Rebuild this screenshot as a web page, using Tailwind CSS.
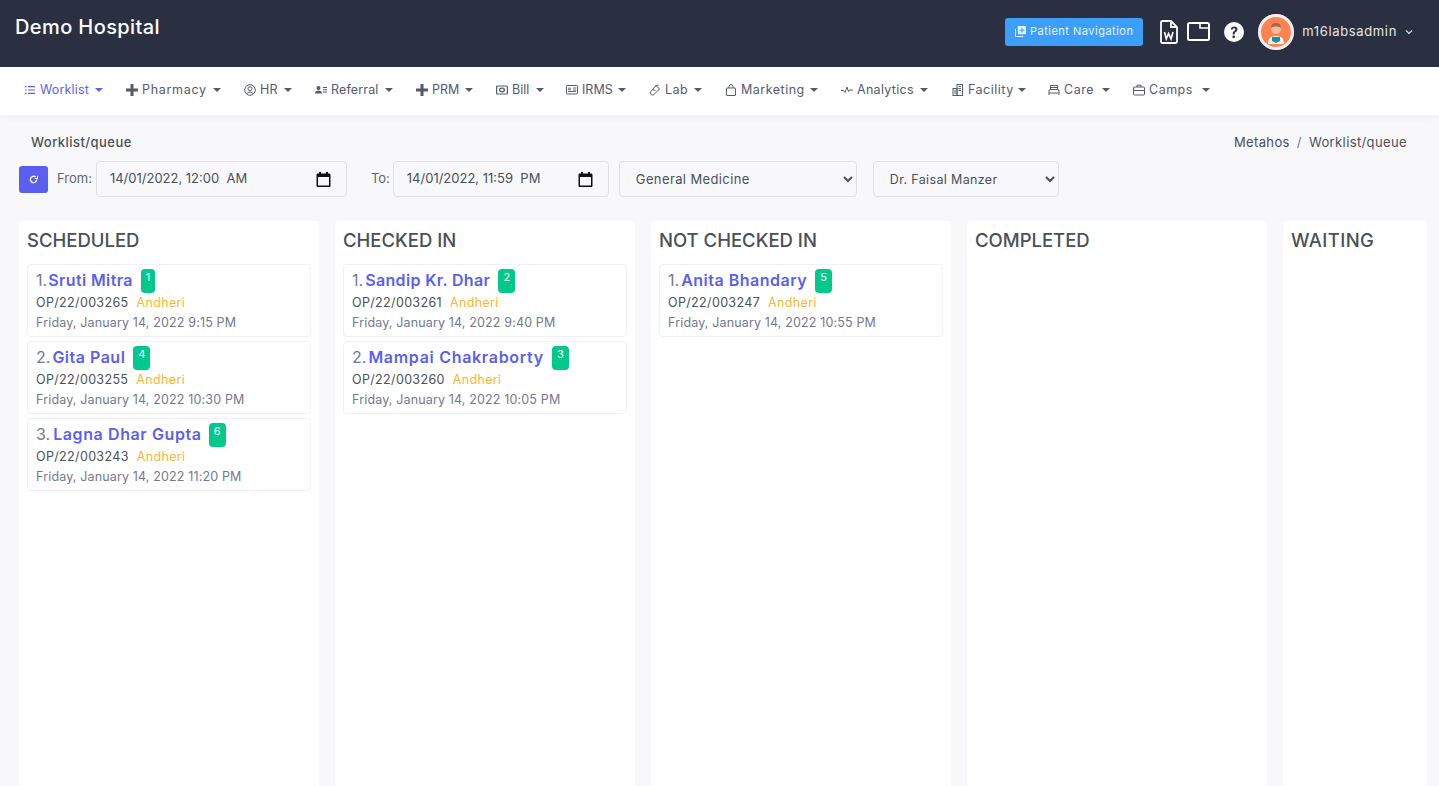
<!DOCTYPE html>
<html lang="en">
<head>
<meta charset="utf-8">
<title>Worklist</title>
<script src="https://cdn.jsdelivr.net/npm/@tailwindcss/browser@4"></script>
</head>
<body class="h-[786px] overflow-hidden bg-[#f8f8fb] font-['Inter','Noto_Sans',sans-serif] text-[13px] text-[#495057]">
<header class="flex h-[67px] items-center justify-between bg-[#2a3042] pb-[4px] pl-[15px] pr-[26px]">
  <div class="-mt-[9px] text-[20px] font-medium tracking-[.4px] text-white">Demo Hospital</div>
  <div class="flex items-center">
    <button class="flex h-[28px] w-[138px] items-center justify-center gap-[4px] rounded-[3px] bg-[#3b9ffa] text-[11px] tracking-[.5px] text-[#e6f3ff]">
      <svg class="size-[11px]" viewBox="0 0 12 12" fill="#e6f3ff"><path d="M4 0h7a1 1 0 0 1 1 1v7a1 1 0 0 1-1 1H4a1 1 0 0 1-1-1V1a1 1 0 0 1 1-1Zm3 2v2H5v1.200h2v2h1.200v-2h2V4h-2V2ZM1 3v7.500c0 .300.200.500.500.500H9v1H1.200A1.200 1.200 0 0 1 0 10.800V3Z"/></svg>
      Patient Navigation
    </button>
    <svg class="ml-[17px] h-[24px] w-[18px]" viewBox="0 0 18 24" fill="none" stroke="#fff" stroke-width="1.800"><path d="M2.500 1h8.500l6 6v14.500a1.500 1.500 0 0 1-1.500 1.500h-13A1.500 1.500 0 0 1 1 21.500v-19A1.500 1.500 0 0 1 2.500 1Z"/><path d="M11 1v6h6"/><path d="m4.500 12 1.800 7 2.200-5.500L11 19l2-7" stroke-width="1.600"/></svg>
    <svg class="ml-[9px] h-[19px] w-[23px]" viewBox="0 0 23 19" fill="none" stroke="#fff" stroke-width="2"><rect x="1" y="1" width="21" height="17" rx="1.500"/><path d="M13 1v5h9" stroke-width="1.600"/></svg>
    <svg class="ml-[14px] size-[20px]" viewBox="0 0 20 20"><circle cx="10" cy="10" r="10" fill="#fff"/><path d="M6.800 7.600C6.900 5.600 8.300 4.400 10.200 4.400c2 0 3.300 1.200 3.300 2.900 0 1.300-.700 2-1.700 2.700-.900.600-1.100 1-1.100 1.900v.500H8.700v-.700c0-1.200.400-1.900 1.400-2.600.800-.600 1.200-1 1.200-1.600 0-.700-.500-1.200-1.200-1.200-.800 0-1.300.500-1.400 1.300Z" fill="#2a3042"/><circle cx="9.700" cy="14.800" r="1.400" fill="#2a3042"/></svg>
    <div class="ml-[14px] flex size-[36px] items-center justify-center overflow-hidden rounded-full bg-[#ff8250] ring-[3px] ring-inset ring-[#f0f0f0]">
      <svg class="size-[24px]" viewBox="0 0 24 24"><path d="M4 24c0-6 3-8 8-8s8 2 8 8Z" fill="#eef3f5"/><circle cx="12" cy="9" r="5" fill="#f3bd98"/><path d="M7 8c0-4 2-5 5-5s5 1 5 5c-2-2-8-2-10 0Z" fill="#a4694a"/><path d="M8 17h8v4l-4 2-4-2Z" fill="#1d8f97"/></svg>
    </div>
    <span class="ml-[8px] text-[13px] tracking-[.65px] text-[#e3e5ea]">m16labsadmin</span>
    <svg class="ml-[8px] size-[8px]" viewBox="0 0 8 8" fill="none" stroke="#e3e5ea" stroke-width="1.100"><path d="m1 2.500 3 3 3-3"/></svg>
  </div>
</header>

<nav class="flex h-[48px] items-center bg-white pb-[2px] pl-[25px] text-[12.500px] tracking-[.5px] text-[#545a6d] shadow-[0_2px_8px_rgba(18,38,63,0.04)]">
  <a class="flex w-[101px] items-center tracking-[.15px] text-[#5b63ee]"><svg class="mr-[5px] size-[10px]" viewBox="0 0 10 10" fill="#5b63ee"><path d="M0 1h1.500v1.200H0Zm3 0h7v1.200H3ZM0 4.400h1.500v1.200H0Zm3 0h7v1.200H3ZM0 7.800h1.500V9H0Zm3 0h7V9H3Z"/></svg>Worklist<i class="ml-auto mr-[23px] size-0 border-x-[4px] border-t-[4px] border-x-transparent border-t-current"></i></a>
  <a class="flex w-[118px] items-center tracking-[.7px]"><svg class="mr-[4px] size-[12px]" viewBox="0 0 12 12" fill="#545a6d"><path d="M4.500 0h3v4.500H12v3H7.500V12h-3V7.500H0v-3h4.500Z"/></svg>Pharmacy<i class="ml-auto mr-[23px] size-0 border-x-[4px] border-t-[4px] border-x-transparent border-t-current"></i></a>
  <a class="flex w-[71px] items-center tracking-[.3px]"><svg class="mr-[4px] size-[12px]" viewBox="0 0 12 12" fill="none" stroke="#545a6d"><circle cx="6" cy="6" r="5.300"/><circle cx="6" cy="4.800" r="2"/><path d="M2.800 9.800c1-2.200 5.400-2.200 6.400 0"/></svg>HR<i class="ml-auto mr-[23px] size-0 border-x-[4px] border-t-[4px] border-x-transparent border-t-current"></i></a>
  <a class="flex w-[101px] items-center tracking-[.15px]"><svg class="mr-[4px] size-[12px]" viewBox="0 0 12 12" fill="#545a6d"><circle cx="3.500" cy="4" r="2"/><path d="M0 9.500c0-2 1.500-3 3.500-3s3.500 1 3.500 3Z"/><path d="M8 3h4v1H8Zm0 2.200h4v1H8Zm0 2.200h4v1H8Z"/></svg>Referral<i class="ml-auto mr-[23px] size-0 border-x-[4px] border-t-[4px] border-x-transparent border-t-current"></i></a>
  <a class="flex w-[80px] items-center tracking-[0px]"><svg class="mr-[4px] size-[12px]" viewBox="0 0 12 12" fill="#545a6d"><path d="M4.500 0h3v4.500H12v3H7.500V12h-3V7.500H0v-3h4.500Z"/></svg>PRM<i class="ml-auto mr-[23px] size-0 border-x-[4px] border-t-[4px] border-x-transparent border-t-current"></i></a>
  <a class="flex w-[70px] items-center tracking-[0px]"><svg class="mr-[4px] size-[12px]" viewBox="0 0 12 12" fill="none" stroke="#545a6d"><rect x=".600" y="2" width="10.800" height="8" rx="1" stroke-width="1.200"/><ellipse cx="6" cy="6" rx="2.400" ry="1.800" stroke-width="1.300"/></svg>Bill<i class="ml-auto mr-[22px] size-0 border-x-[4px] border-t-[4px] border-x-transparent border-t-current"></i></a>
  <a class="flex w-[83px] items-center tracking-[0px]"><svg class="mr-[4px] size-[12px]" viewBox="0 0 12 12" fill="none" stroke="#545a6d"><rect x=".500" y="1.500" width="11" height="8.500" rx=".800"/><path d="M2 4.200h3M7 4h3M7 6h3M2 7.500h8M2 5.800h3" stroke-width=".900"/></svg>IRMS<i class="ml-auto mr-[23px] size-0 border-x-[4px] border-t-[4px] border-x-transparent border-t-current"></i></a>
  <a class="flex w-[76px] items-center"><svg class="mr-[4px] size-[12px]" viewBox="0 0 12 12" fill="none" stroke="#545a6d"><path d="m7 1.500 3.500 3.500-5.500 5.500a2 2 0 0 1-3.200-.500 2 2 0 0 1-.100-2.300ZM6 2.500 9.500 .9M3.500 5.500l3 1"/></svg>Lab<i class="ml-auto mr-[23px] size-0 border-x-[4px] border-t-[4px] border-x-transparent border-t-current"></i></a>
  <a class="flex w-[116px] items-center"><svg class="mr-[4px] size-[12px]" viewBox="0 0 12 12" fill="none" stroke="#545a6d"><rect x="1.500" y="4" width="9" height="7.500" rx=".500"/><path d="M4 4V2.500a2 2 0 0 1 4 0V4"/></svg>Marketing<i class="ml-auto mr-[23px] size-0 border-x-[4px] border-t-[4px] border-x-transparent border-t-current"></i></a>
  <a class="flex w-[111px] items-center tracking-[.3px]"><svg class="mr-[4px] h-[12px] w-[12px]" viewBox="0 0 12 12" fill="none" stroke="#545a6d"><path d="M0 6.500h2.500L4 8.500 6 3l1.500 4.500L8.500 6H12"/></svg>Analytics<i class="ml-auto mr-[24px] size-0 border-x-[4px] border-t-[4px] border-x-transparent border-t-current"></i></a>
  <a class="flex w-[96px] items-center"><svg class="mr-[4px] size-[12px]" viewBox="0 0 12 12" fill="none" stroke="#545a6d"><rect x="5" y=".500" width="5.500" height="11"/><rect x="1" y="4.500" width="4" height="7"/><path d="M6.500 2.500h2.500M6.500 4.500h2.500M6.500 6.500h2.500M2 7h2M2 9h2"/></svg>Facility<i class="ml-auto mr-[22px] size-0 border-x-[4px] border-t-[4px] border-x-transparent border-t-current"></i></a>
  <a class="flex w-[85px] items-center"><svg class="mr-[4px] size-[12px]" viewBox="0 0 12 12" fill="none" stroke="#545a6d"><path d="M2.500 5.500V1.500h7v4M1 11V7a1.500 1.500 0 0 1 1.500-1.500h7A1.500 1.500 0 0 1 11 7v4M1 9h10M2.500 3.500h7"/></svg>Care<i class="ml-auto mr-[23px] size-0 border-x-[4px] border-t-[4px] border-x-transparent border-t-current"></i></a>
  <a class="flex w-[100px] items-center"><svg class="mr-[4px] size-[12px]" viewBox="0 0 12 12" fill="none" stroke="#545a6d"><rect x=".500" y="3" width="11" height="8" rx="1"/><path d="M4 3V1.200h4V3M.500 6.500h11M5 6.500h2"/></svg>Camps<i class="ml-auto mr-[23px] size-0 border-x-[4px] border-t-[4px] border-x-transparent border-t-current"></i></a>
</nav>

<main class="pl-[19px] pr-[12px]">
  <div class="flex items-center justify-between pl-[12px] pr-[20px] pt-[18px] text-[13px] leading-[19px]">
    <span class="font-medium tracking-[.45px]">Worklist/queue</span>
    <span class="flex gap-[7px] tracking-[.38px]"><span>Metahos</span><span class="text-[#74788d]">/</span><span>Worklist/queue</span></span>
  </div>
  <div class="mt-[9px] flex h-[36px] items-center">
    <button class="flex h-[27px] w-[29px] items-center justify-center rounded-[3px] bg-[#5b5ff0]"><svg class="size-[9px]" viewBox="0 0 10 10" fill="none" stroke="#fff" stroke-width="1.500"><path d="M8.500 5A3.500 3.500 0 1 1 7.300 2.300"/><path d="M9.500.8v3h-3" stroke-width="1.200"/></svg></button>
    <span class="ml-[9px] text-[#5f6473]">From:</span>
    <div class="ml-[4px] flex h-[36px] w-[251px] items-center justify-between rounded-[4px] border border-[#dfe1e6] bg-[#f8f8fb] pl-[13px] pr-[15px] text-[13px]">14/01/2022, 12:00&nbsp; AM<svg class="size-[15px]" viewBox="0 0 15 15"><path fill="#111" fill-rule="evenodd" d="M3 0h2v1.500h5V0h2v1.500h1.200c.800 0 1.300.600 1.300 1.300v10.900c0 .800-.500 1.300-1.300 1.300H1.800c-.800 0-1.300-.500-1.300-1.300V2.800c0-.700.500-1.300 1.300-1.300H3Zm-1 5v8.500h11V5Z"/></svg></div>
    <span class="ml-[24px] text-[#5f6473]">To:</span>
    <div class="ml-[3px] flex h-[36px] w-[216px] items-center justify-between rounded-[4px] border border-[#dfe1e6] bg-[#f8f8fb] pl-[13px] pr-[15px] text-[13px]">14/01/2022, 11:59&nbsp; PM<svg class="size-[15px]" viewBox="0 0 15 15"><path fill="#111" fill-rule="evenodd" d="M3 0h2v1.500h5V0h2v1.500h1.200c.800 0 1.300.600 1.300 1.300v10.900c0 .800-.500 1.300-1.300 1.300H1.800c-.800 0-1.300-.500-1.300-1.300V2.800c0-.700.500-1.300 1.300-1.300H3Zm-1 5v8.500h11V5Z"/></svg></div>
    <select class="ml-[10px] h-[36px] w-[238px] rounded-[4px] border border-[#dfe1e6] bg-[#f8f8fb] pl-[12px] text-[13px] tracking-[.38px]"><option>General Medicine</option></select>
    <select class="ml-[16px] h-[36px] w-[186px] rounded-[4px] border border-[#dfe1e6] bg-[#f8f8fb] pl-[12px] text-[12.500px] tracking-[.35px]"><option>Dr. Faisal Manzer</option></select>
  </div>

  <div class="mt-[24px] flex h-[600px] gap-[16px] overflow-hidden">
    <section class="w-[300px] shrink-0 rounded-t-[4px] bg-white px-[8px] pt-[8px]">
      <h2 class="mb-[12px] text-[18.500px] leading-[23px] font-medium">SCHEDULED</h2>
      <div class="flex flex-col gap-[4px]">
        <article class="h-[73px] rounded-[4px] border border-[#f0f0f6] pl-[8px] pt-[3px]"><div class="flex h-[24px] items-start text-[16px] leading-[24px] text-[#74788d]">1.<b class="ml-[1px] font-semibold tracking-[.4px] text-[#5b5ff0]">Sruti Mitra</b><span class="ml-[8px] mt-[1px] flex h-[24px] w-[14px] justify-center rounded-[4px] bg-[#00c98b] text-[11px] leading-[16px] text-white">1</span></div><div class="mt-[2px] flex h-[19px] items-center text-[12.500px] tracking-[.35px]">OP/22/003265<span class="ml-[8px] text-[#fbb62f]">Andheri</span></div><div class="text-[12.500px] leading-[20px] tracking-[.15px] text-[#74788d]">Friday, January 14, 2022 9:15 PM</div></article>
        <article class="h-[73px] rounded-[4px] border border-[#f0f0f6] pl-[8px] pt-[3px]"><div class="flex h-[24px] items-start text-[16px] leading-[24px] text-[#74788d]">2.<b class="ml-[2px] font-semibold tracking-[.5px] text-[#5b5ff0]">Gita Paul</b><span class="ml-[8px] mt-[1px] flex h-[24px] w-[17px] justify-center rounded-[4px] bg-[#00c98b] text-[11px] leading-[16px] text-white">4</span></div><div class="mt-[2px] flex h-[19px] items-center text-[12.500px] tracking-[.35px]">OP/22/003255<span class="ml-[8px] text-[#fbb62f]">Andheri</span></div><div class="text-[12.500px] leading-[20px] tracking-[.15px] text-[#74788d]">Friday, January 14, 2022 10:30 PM</div></article>
        <article class="h-[73px] rounded-[4px] border border-[#f0f0f6] pl-[8px] pt-[3px]"><div class="flex h-[24px] items-start text-[16px] leading-[24px] text-[#74788d]">3.<b class="ml-[3px] font-semibold tracking-[.6px] text-[#5b5ff0]">Lagna Dhar Gupta</b><span class="ml-[7px] mt-[1px] flex h-[24px] w-[17px] justify-center rounded-[4px] bg-[#00c98b] text-[11px] leading-[16px] text-white">6</span></div><div class="mt-[2px] flex h-[19px] items-center text-[12.500px] tracking-[.35px]">OP/22/003243<span class="ml-[8px] text-[#fbb62f]">Andheri</span></div><div class="text-[12.500px] leading-[20px] tracking-[.15px] text-[#74788d]">Friday, January 14, 2022 11:20 PM</div></article>
      </div>
    </section>
    <section class="w-[300px] shrink-0 rounded-t-[4px] bg-white px-[8px] pt-[8px]">
      <h2 class="mb-[12px] text-[18.500px] leading-[23px] font-medium">CHECKED IN</h2>
      <div class="flex flex-col gap-[4px]">
        <article class="h-[73px] rounded-[4px] border border-[#f0f0f6] pl-[8px] pt-[3px]"><div class="flex h-[24px] items-start text-[16px] leading-[24px] text-[#74788d]">1.<b class="ml-[2px] font-semibold tracking-[.35px] text-[#5b5ff0]">Sandip Kr. Dhar</b><span class="ml-[8px] mt-[1px] flex h-[24px] w-[17px] justify-center rounded-[4px] bg-[#00c98b] text-[11px] leading-[16px] text-white">2</span></div><div class="mt-[2px] flex h-[19px] items-center text-[12.500px] tracking-[.35px]">OP/22/003261<span class="ml-[8px] text-[#fbb62f]">Andheri</span></div><div class="text-[12.500px] leading-[20px] tracking-[.15px] text-[#74788d]">Friday, January 14, 2022 9:40 PM</div></article>
        <article class="h-[73px] rounded-[4px] border border-[#f0f0f6] pl-[8px] pt-[3px]"><div class="flex h-[24px] items-start text-[16px] leading-[24px] text-[#74788d]">2.<b class="ml-[2px] font-semibold tracking-[.7px] text-[#5b5ff0]">Mampai Chakraborty</b><span class="ml-[8px] mt-[1px] flex h-[24px] w-[17px] justify-center rounded-[4px] bg-[#00c98b] text-[11px] leading-[16px] text-white">3</span></div><div class="mt-[2px] flex h-[19px] items-center text-[12.500px] tracking-[.35px]">OP/22/003260<span class="ml-[8px] text-[#fbb62f]">Andheri</span></div><div class="text-[12.500px] leading-[20px] tracking-[.15px] text-[#74788d]">Friday, January 14, 2022 10:05 PM</div></article>
      </div>
    </section>
    <section class="w-[300px] shrink-0 rounded-t-[4px] bg-white px-[8px] pt-[8px]">
      <h2 class="mb-[12px] text-[18.500px] leading-[23px] font-medium">NOT CHECKED IN</h2>
      <article class="h-[73px] rounded-[4px] border border-[#f0f0f6] pl-[8px] pt-[3px]"><div class="flex h-[24px] items-start text-[16px] leading-[24px] text-[#74788d]">1.<b class="ml-[2px] font-semibold tracking-[.5px] text-[#5b5ff0]">Anita Bhandary</b><span class="ml-[8px] mt-[1px] flex h-[24px] w-[17px] justify-center rounded-[4px] bg-[#00c98b] text-[11px] leading-[16px] text-white">5</span></div><div class="mt-[2px] flex h-[19px] items-center text-[12.500px] tracking-[.35px]">OP/22/003247<span class="ml-[8px] text-[#fbb62f]">Andheri</span></div><div class="text-[12.500px] leading-[20px] tracking-[.15px] text-[#74788d]">Friday, January 14, 2022 10:55 PM</div></article>
    </section>
    <section class="w-[300px] shrink-0 rounded-t-[4px] bg-white px-[8px] pt-[8px]"><h2 class="text-[18.500px] leading-[23px] font-medium">COMPLETED</h2></section>
    <section class="w-[300px] shrink-0 rounded-t-[4px] bg-white px-[8px] pt-[8px]"><h2 class="text-[18.500px] leading-[23px] font-medium tracking-[.4px]">WAITING</h2></section>
  </div>
</main>
</body>
</html>
